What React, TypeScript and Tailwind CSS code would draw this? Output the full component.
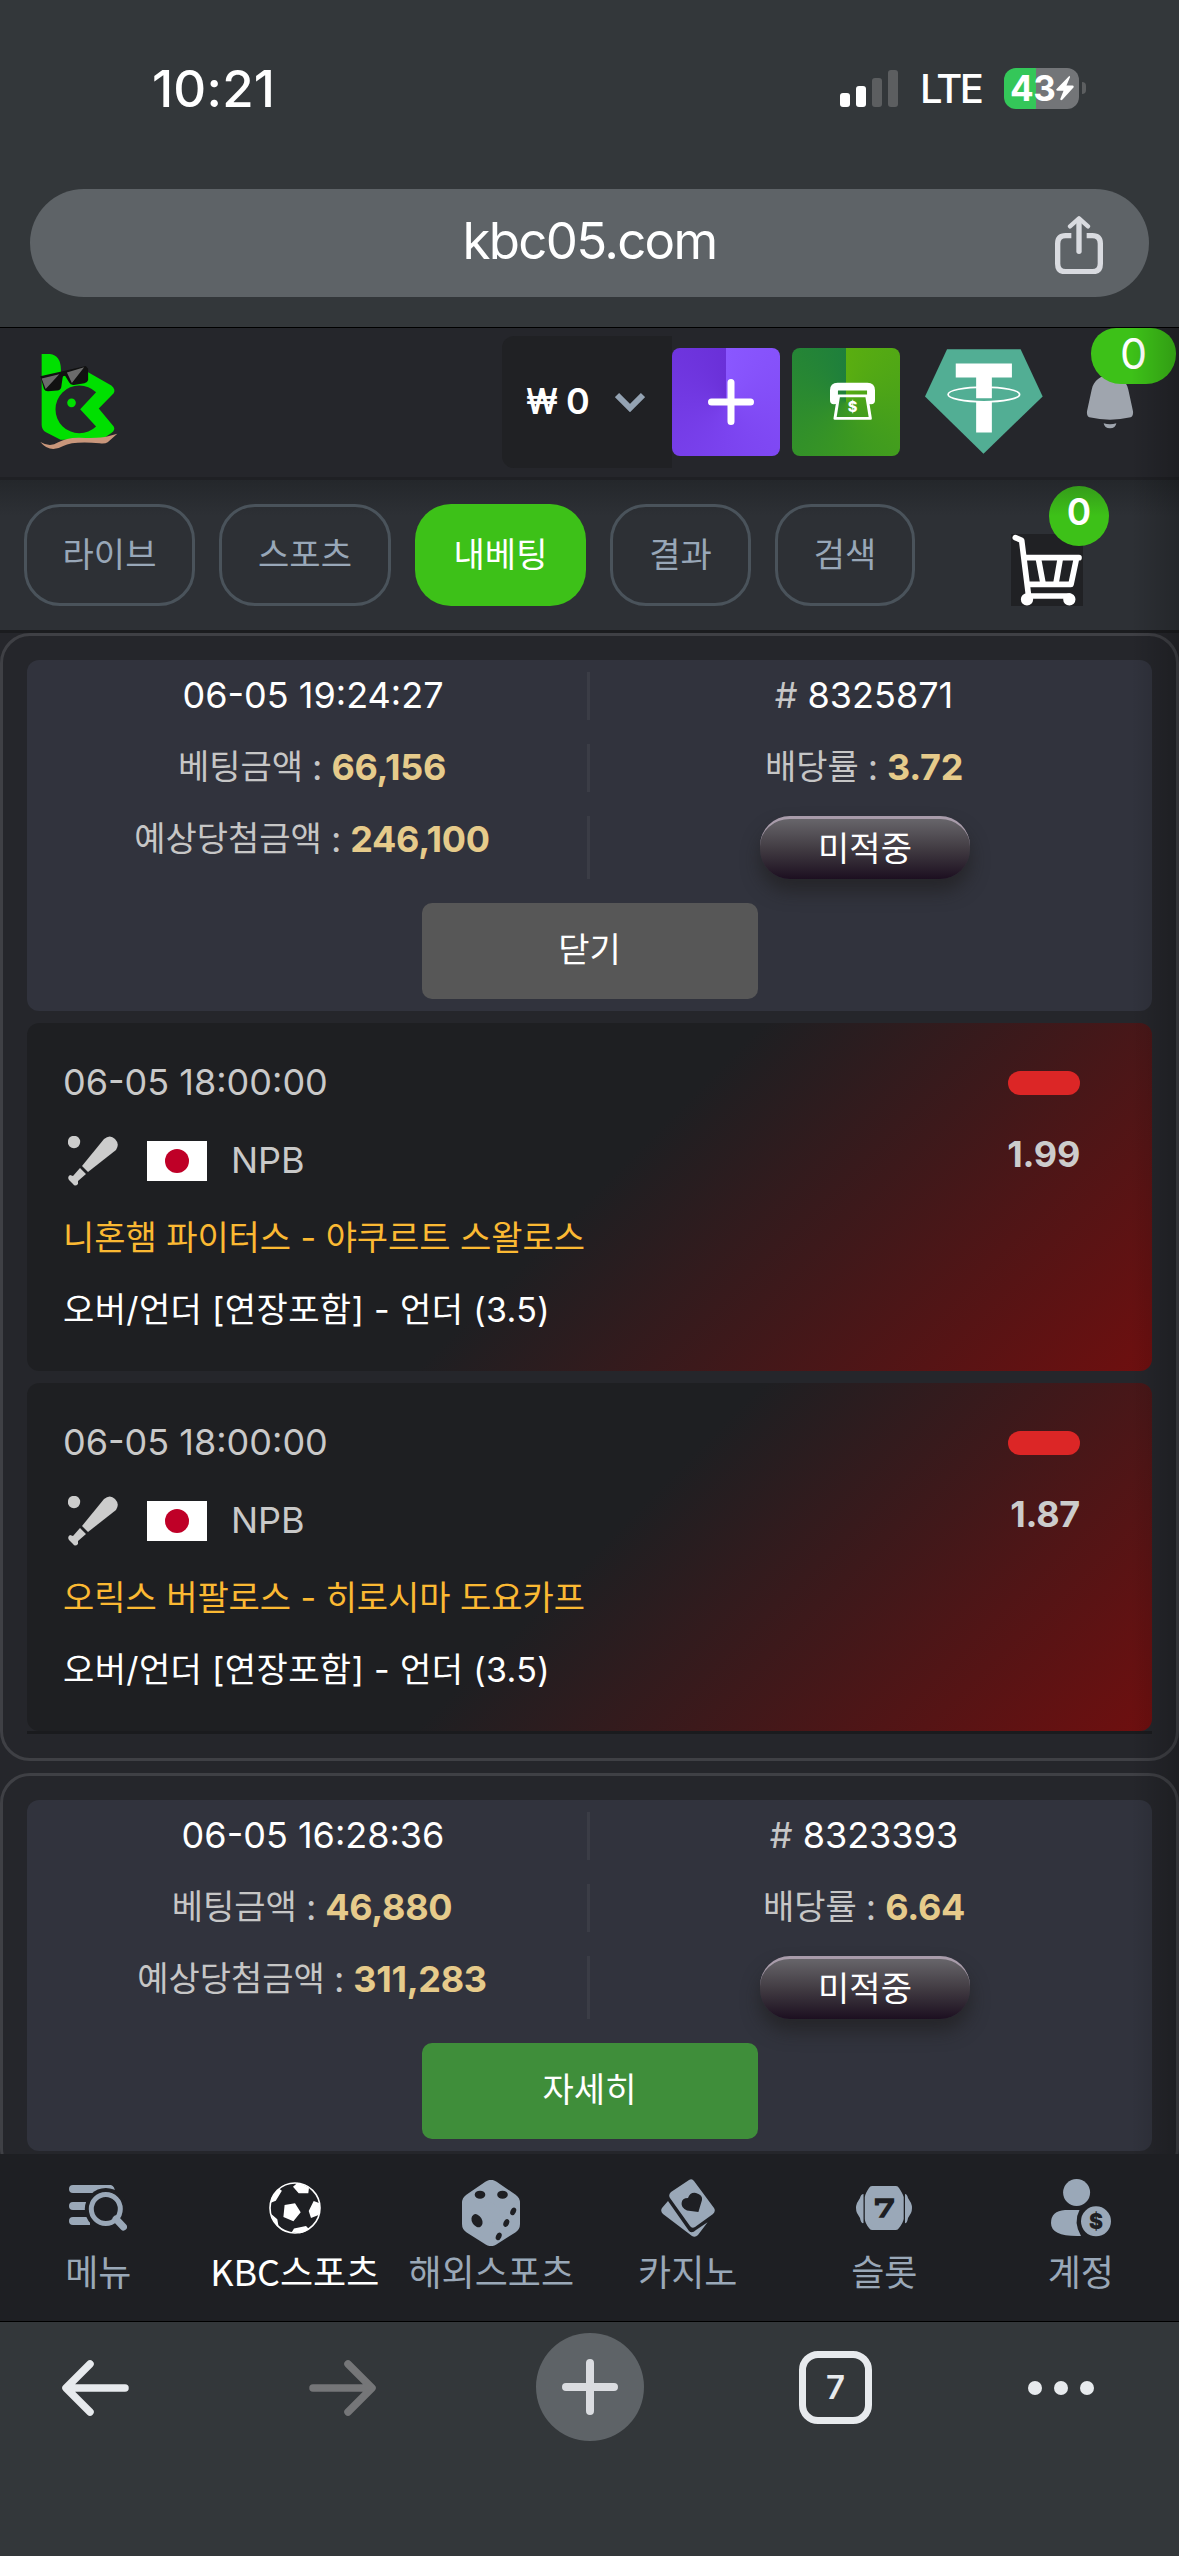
import React from "react";
import clsx from "clsx";

type Match = {
  time: string;
  league: string;
  teams: string;
  pick: string;
  odd: string;
};

type Bet = {
  date: string;
  id: string;
  amount: string;
  odds: string;
  expected: string;
  open: boolean;
  matches: Match[];
};

const bets: Bet[] = [
  {
    date: "06-05 19:24:27",
    id: "8325871",
    amount: "66,156",
    odds: "3.72",
    expected: "246,100",
    open: true,
    matches: [
      {
        time: "06-05 18:00:00",
        league: "NPB",
        teams: "니혼햄 파이터스 - 야쿠르트 스왈로스",
        pick: "오버/언더 [연장포함] - 언더 (3.5)",
        odd: "1.99",
      },
      {
        time: "06-05 18:00:00",
        league: "NPB",
        teams: "오릭스 버팔로스 - 히로시마 도요카프",
        pick: "오버/언더 [연장포함] - 언더 (3.5)",
        odd: "1.87",
      },
    ],
  },
  {
    date: "06-05 16:28:36",
    id: "8323393",
    amount: "46,880",
    odds: "6.64",
    expected: "311,283",
    open: false,
    matches: [],
  },
];

const tabs = [
  { label: "라이브", width: "w-[171px]" },
  { label: "스포츠", width: "w-[172px]" },
  { label: "내베팅", width: "w-[171px]", active: true },
  { label: "결과", width: "w-[141px]" },
  { label: "검색", width: "w-[140px]" },
];

function StatusBar() {
  return (
    <div className="flex h-[176px] items-center pl-[152px] pr-[93px] text-white">
      <span className="pt-0.5 text-[51px] font-medium tracking-[0.2px]">10:21</span>
      <div className="ml-auto flex items-center">
        <div className="flex h-[37px] items-end gap-1.5">
          <div className="h-3.5 w-2.5 rounded-[3px] bg-white" />
          <div className="h-[21px] w-2.5 rounded-[3px] bg-white" />
          <div className="h-[29px] w-2.5 rounded-[3px] bg-[#5c5e60]" />
          <div className="h-[37px] w-2.5 rounded-[3px] bg-[#5c5e60]" />
        </div>
        <span className="ml-[22px] mt-0.5 w-[61px] text-[40px] font-medium tracking-[-2.6px]">LTE</span>
        <div className="ml-[23px] flex h-[41px] w-[75px] items-center rounded-xl bg-[linear-gradient(90deg,#34c759_32px,#737578_32px)] pl-[6px]">
          <span className="w-[46px] text-[35px] font-bold tracking-[-0.5px]">43</span>
          <svg width="18" height="26" viewBox="679 77 55 77" fill="#fff">
            <path d="M720 78L680 119Q679 124 684 124H702L692 149Q693 155 699 151L733 113Q734 108 729 108H711L722 82Z" />
          </svg>
        </div>
        <div className="ml-[3px] h-3 w-1 rounded-r-full bg-[#5c5e60]" />
      </div>
    </div>
  );
}

function AddressBar() {
  return (
    <div className="mx-[30px] mt-[13px] grid h-[108px] grid-cols-[1fr_auto_1fr] items-center rounded-full bg-[#5e6367]">
      <span />
      <span className="pb-1 text-[51px] tracking-[-1.7px] text-white">kbc05.com</span>
      <svg className="mr-[46px] mt-1 justify-self-end" width="48" height="58" viewBox="675 497 144 174" fill="none" stroke="#d9dbe0" strokeWidth="16">
        <path d="M724 556H707Q683 556 683 580V640Q683 664 707 664H787Q811 664 811 640V580Q811 556 787 556H770" />
        <path d="M747 603V508" strokeLinecap="round" />
        <path d="M720 528L747 504L774 528" strokeWidth="13" strokeLinecap="round" strokeLinejoin="round" />
      </svg>
    </div>
  );
}

function Logo() {
  return (
    <svg width="78" height="97" viewBox="120 100 235 290">
      <path d="M125 102H150Q182 106 183 148V170L265 157L335 197Q349 209 342 220L297 266L342 320Q348 330 335 340L305 360H182L138 338Q125 330 125 315Z" fill="#00e000" />
      <path d="M289 217A72 72 0 1 0 289 320L241 268Z" fill="#25262b" />
      <circle cx="215" cy="249" r="13" fill="#00e000" />
      <path d="M121 169L258 138L265 146V180Q263 188 254 190L222 195Q212 196 208 188L196 168Q188 166 188 174L184 202Q182 211 172 212L144 214Q135 214 132 207Z" fill="#111" />
      <path d="M125 176L178 163L137 207ZM201 158L253 142L216 189Z" fill="#6b6b6b" />
      <path d="M121 367Q150 384 175 368Q200 353 240 354Q300 357 325 350L353 342L324 368Q316 373 300 371Q220 364 190 379Q150 402 121 367Z" fill="#c9967b" />
    </svg>
  );
}

function Header() {
  return (
    <header className="relative flex h-[152px] items-center overflow-hidden border-b-[3px] border-[#1f2024] bg-[#25262b] pb-0.5 pl-10 pr-[45px]">
      <Logo />
      <div className="ml-auto flex h-[132px] w-[170px] items-center rounded-l-xl bg-[#202124] pl-6">
        <div className="flex w-[89px] items-center gap-[9px] pb-0.5 text-[36px] font-semibold text-white">
          <span className="inline-block w-[31px] origin-left scale-x-[0.88]">₩</span>
          <span>0</span>
        </div>
        <svg width="30" height="20" viewBox="0 0 30 20" fill="none" stroke="#94a3b3" strokeWidth="6">
          <path d="M2 3L15 16L28 3" />
        </svg>
      </div>
      <button className="flex size-[108px] items-center justify-center rounded-lg bg-[conic-gradient(#8a57ff,#7b43ef_180deg,#6a30d8)] pl-2.5">
        <svg width="46" height="46" viewBox="0 0 46 46" stroke="#fff" strokeWidth="7" strokeLinecap="round">
          <path d="M23 3.500V42.500M3.500 23H42.500" />
        </svg>
      </button>
      <button className="ml-3 flex size-[108px] items-center justify-center rounded-lg bg-[conic-gradient(#5aae10,#3a9722_180deg,#1e7f3c)] pl-3">
        <svg width="45" height="39" viewBox="28 128 136 116" fill="none" stroke="#fff">
          <path d="M40 182V152Q40 141 51 141H141Q152 141 152 152V182" strokeWidth="24" strokeLinecap="round" />
          <path d="M54 169H139L150 237H43Z" strokeWidth="9" strokeLinejoin="round" />
          <text x="96" y="217" textAnchor="middle" fontSize="44" fontWeight="800" fill="#fff" stroke="none">$</text>
        </svg>
      </button>
      <svg className="ml-[25px]" width="118" height="105" viewBox="316 29 353 314" fill="#fff">
        <path d="M382 30H602L668 171L491 342L316 171Z" fill="#52ae94" />
        <path d="M408 72H576V114H516V176H469V114H408ZM469 187H516V279H469Z" />
        <ellipse cx="492" cy="165" rx="107" ry="22" fill="none" stroke="#fff" strokeWidth="5" />
      </svg>
      <div className="relative ml-[43px]">
        <svg width="48" height="57" viewBox="798 100 144 171" fill="#9fa5ae">
          <path d="M815 150C821 122 842 107 870 107C898 107 919 122 925 150L939 215Q941 229 932 233Q870 247 808 233Q799 229 801 215Z" />
          <path d="M851 251Q870 257 889 251Q887 266 870 266Q853 266 851 251Z" />
        </svg>
        <div className="absolute -top-[45px] left-[5px] flex h-14 w-[85px] items-center justify-center rounded-b-[30px] rounded-t-[25px] bg-[#3dc118] pb-1.5 text-[43px] leading-none text-white">
          0
        </div>
      </div>
    </header>
  );
}

function Tabs() {
  return (
    <div className="flex h-[153px] gap-6 border-b-[3px] border-[#1b1c1f] bg-[linear-gradient(#24272b,#2d3035_36px)] pl-6 pr-24 pt-6">
      {tabs.map((tab) => (
        <button
          key={tab.label}
          className={clsx(
            "h-[102px] shrink-0 rounded-[36px] pb-0.5 text-[34px]",
            tab.width,
            tab.active ? "bg-[#3dc118] text-white" : "border-[3px] border-[#4a535b] text-[#98a7b8]"
          )}
        >
          {tab.label}
        </button>
      ))}
      <div className="relative ml-auto mt-[30px] size-[72px] bg-[#202124]">
        <svg width="72" height="72" viewBox="573 582 216 216" fill="none" stroke="#fff" strokeWidth="17" strokeLinecap="round" strokeLinejoin="round">
          <path d="M586 593L605 601L626 770M620 653H777M770 653L753 733H628" />
          <path d="M655 655L669 730M721 655L708 730M622 768H748" />
          <circle cx="621" cy="778" r="10" fill="#fff" />
          <circle cx="748" cy="778" r="10" fill="#fff" />
        </svg>
        <span className="absolute -top-12 left-[38px] flex size-[60px] items-center justify-center rounded-full bg-[linear-gradient(#359c1a,#3dc118_50%)] pb-2 text-[37px] font-semibold text-white">
          0
        </span>
      </div>
    </div>
  );
}

function Cell({ children, divider }: { children: React.ReactNode; divider?: boolean }) {
  return (
    <div
      className={clsx(
        "flex h-full justify-center whitespace-nowrap leading-[46px] text-[#c6c6c6]",
        divider && "border-r-[3px] border-[#3b3d46]"
      )}
    >
      {children}
    </div>
  );
}

function Stat({ label, value }: { label: string; value: string }) {
  return (
    <>
      <span className="text-[34px]">{label}</span>
      <span className="mx-[9px]"> : </span>
      <span className="mr-0.5 font-bold tracking-[-0.3px] text-[#e6cb8b]">{value}</span>
    </>
  );
}

function BetSummary({ bet }: { bet: Bet }) {
  return (
    <div className="h-[351px] rounded-xl bg-[#31333d] px-3 pt-3 text-[36px]">
      <div className="grid grid-cols-[551px_1fr] grid-rows-[48px_48px_63px] gap-y-6">
        <Cell divider>
          <span className="text-white">{bet.date}</span>
        </Cell>
        <Cell>
          #<span className="ml-2.5 mr-0.5 text-white">{bet.id}</span>
        </Cell>
        <Cell divider>
          <Stat label="베팅금액" value={bet.amount} />
        </Cell>
        <Cell>
          <Stat label="배당률" value={bet.odds} />
        </Cell>
        <Cell divider>
          <Stat label="예상당첨금액" value={bet.expected} />
        </Cell>
        <Cell>
          <span className="h-[63px] w-[210px] rounded-[30px] border-t-[3px] border-[#a99cab] bg-[linear-gradient(#67656a,#413b42_50%,#1c0f20)] text-center text-[34px] leading-[59px] text-white shadow-[0_12px_18px_rgba(30,28,28,0.6)]">
            미적중
          </span>
        </Cell>
      </div>
      <button
        className={clsx(
          "mx-auto mt-6 block h-24 w-[336px] rounded-[10px] pb-[3px] text-[34px] text-white",
          bet.open ? "bg-[#575757]" : "bg-[#3f8e3a]"
        )}
      >
        {bet.open ? "닫기" : "자세히"}
      </button>
    </div>
  );
}

function MatchRow({ match }: { match: Match }) {
  return (
    <div className="flex h-[348px] justify-between rounded-xl bg-[linear-gradient(135deg,#1e1f22_50%,#6f0f0f)] py-9 pl-9 pr-[72px] text-[36px] leading-[47px] text-[#c9c9c9]">
      <div className="flex flex-col whitespace-nowrap">
        <span>{match.time}</span>
        <div className="mt-[25px] flex h-[60px] items-center">
          <svg className="ml-[5px]" width="50" height="50" viewBox="0 0 50 50" fill="#ccc">
            <circle cx="6" cy="6" r="6.200" />
            <path d="M36 3Q42 -2 47 3Q52 8 48 14L20 36L14 30Z" />
            <path d="M12 32L18 38L10 45V48Q7 51 5 48L1 44Q-1 41 2 39L5 40Z" />
          </svg>
          <div className="ml-[29px] flex h-10 w-[60px] items-center justify-center bg-white">
            <div className="size-6 rounded-full bg-[#bf0027]" />
          </div>
          <span className="ml-6 pb-px">{match.league}</span>
        </div>
        <span className="mt-[23px] text-[34px] tracking-[-0.06px] text-[#fbb933]">{match.teams}</span>
        <span className="mt-[25px] text-[34px] tracking-[0.36px] text-white">{match.pick}</span>
      </div>
      <div className="flex flex-col items-end">
        <div className="mt-3 h-6 w-[72px] rounded-xl bg-[#dc2626]" />
        <span className="mt-9 font-bold tracking-[-0.3px] text-[#ccc]">{match.odd}</span>
      </div>
    </div>
  );
}

function BetCard({ bet }: { bet: Bet }) {
  return (
    <section className="rounded-[30px] border-[3px] border-[#3f4045] p-6">
      <BetSummary bet={bet} />
      {bet.matches.length > 0 && (
        <div className="mt-3 flex flex-col gap-3 border-b-[3px] border-[#1a1b1e]">
          {bet.matches.map((match) => (
            <MatchRow key={match.teams} match={match} />
          ))}
        </div>
      )}
    </section>
  );
}

const icons = {
  menu: (
    <svg width="58" height="46" viewBox="0 0 58 46" fill="#9aa8b8">
      <path d="M4 0H42Q46 1 46 8H4Q0 8 0 4Q0 0 4 0ZM4 17H18V25H4Q0 25 0 21Q0 17 4 17ZM4 32H21V40H4Q0 40 0 36Q0 32 4 32Z" />
      <circle cx="36.800" cy="24" r="21" fill="#1e1f23" />
      <circle cx="36.800" cy="24" r="14.500" fill="none" stroke="#9aa8b8" strokeWidth="5" />
      <path d="M47 34L54.500 42" stroke="#9aa8b8" strokeWidth="7" strokeLinecap="round" />
    </svg>
  ),
  ball: (
    <svg width="52" height="52" viewBox="0 0 52 52" fill="#fff">
      <circle cx="26" cy="26" r="25" fill="none" stroke="#fff" strokeWidth="1.600" />
      <path d="M15.600 23L26 21.300L31.700 30.300L24.400 39.300L14.400 35ZM24 4.700L28.600 0.700Q35 2 40 5.700L39.300 11.300H29.700ZM1.800 20.700L3 14.700L10.200 6.700L12.900 8.700L6.800 18.700ZM44.700 19L50 21Q52 28 49.600 33L42 36L39.700 29ZM22.900 50L25 46.500L37 44L40 47Q35 51 30.500 51.300ZM2.200 32L8.300 37.300L9.500 44L16 50Q5 44 2.200 32Z" />
    </svg>
  ),
  dice: (
    <svg className="mt-2.5" width="58" height="66" viewBox="0 0 58 66" fill="#1e1f23">
      <path d="M29 10L48 23V44L29 56L10 44V23Z" fill="#9aa8b8" stroke="#9aa8b8" strokeWidth="20" strokeLinejoin="round" />
      <ellipse cx="18" cy="14.700" rx="5.300" ry="4" />
      <ellipse cx="40.500" cy="14.700" rx="5.300" ry="4" />
      <ellipse cx="15" cy="40.700" rx="5" ry="7" transform="rotate(-30 15 40.700)" />
      <ellipse cx="51.200" cy="31.300" rx="2.700" ry="4" transform="rotate(25 51.200 31.300)" />
      <ellipse cx="44.300" cy="43" rx="2.700" ry="4" transform="rotate(25 44.300 43)" />
      <ellipse cx="36.700" cy="56.300" rx="2.700" ry="4" transform="rotate(25 36.700 56.300)" />
    </svg>
  ),
  cards: (
    <svg width="54" height="58" viewBox="0 0 54 58" fill="#9aa8b8">
      <path d="M28 1Q31 -1 33 2L53 29Q55 32 52 35L34 48Q31 50 29 47L9 19Q7 16 10 13Z" />
      <path d="M7 22L28 52Q31 55 35 51L46.600 43.300L37 56Q34 59 31 57L2 35Q-1 32 1 29Z" />
      <path d="M20.600 24Q21 19 27 19Q29 13 35 14Q42 16 41 21L37.400 33L26 31.500Q20 29 20.600 24Z" fill="#1e1f23" />
    </svg>
  ),
  slot: (
    <svg width="56" height="44" viewBox="0 0 56 44" fill="#9aa8b8">
      <path d="M16 0H40Q42 0 43 2Q47 8 47.700 11V33Q47 37 43 42Q42 44 40 44H16Q14 44 13 42Q9 37 8.800 33V11Q9 8 13 2Q14 0 16 0Z" />
      <path d="M7.500 8V37Q5 38 4 32L1 27Q-1 22 1 17L4 12Q5 8 7.500 8ZM49 8V37Q51 38 52 32L55 27Q57 22 55 17L52 12Q51 8 49 8Z" />
      <text
        x="22"
        y="31.500"
        textAnchor="middle"
        fontSize="25"
        fontWeight="700"
        fill="#1e1f23"
        stroke="#1e1f23"
        strokeWidth="1.500"
        transform="scale(1.3 1)"
        className="font-['DejaVu_Serif',serif]"
      >
        7
      </text>
    </svg>
  ),
  account: (
    <svg width="60" height="58" viewBox="0 0 60 58" fill="#9aa8b8">
      <circle cx="25.600" cy="13.500" r="13.500" />
      <path d="M14 31H28.500Q22 43 30 57Q0 58 0 44Q0 32 14 31Z" />
      <circle cx="45" cy="42.300" r="15" />
      <text x="45" y="50" textAnchor="middle" fontSize="21" fontWeight="900" fill="#1e1f23">$</text>
    </svg>
  ),
};

const navItems = [
  { label: "메뉴", icon: icons.menu },
  { label: "KBC스포츠", icon: icons.ball, active: true },
  { label: "해외스포츠", icon: icons.dice },
  { label: "카지노", icon: icons.cards },
  { label: "슬롯", icon: icons.slot },
  { label: "계정", icon: icons.account },
];

function BottomNav() {
  return (
    <nav className="grid h-[168px] grid-cols-6 border-b border-black bg-[#1e1f23] pt-5">
      {navItems.map((item) => (
        <div key={item.label} className="flex flex-col items-center">
          <div className="flex h-[68px] items-center">{item.icon}</div>
          <span
            className={clsx(
              "mt-1 whitespace-nowrap font-['Noto_Sans_CJK_KR',sans-serif] text-[36px] leading-[48px]",
              item.active ? "text-white" : "text-[#9aa8b8]"
            )}
          >
            {item.label}
          </span>
        </div>
      ))}
    </nav>
  );
}

function BrowserToolbar() {
  return (
    <div className="flex h-[131px] items-center pl-[62px]">
      <svg width="67" height="56" viewBox="0 0 67 56" fill="none" stroke="#e7eaed" strokeWidth="7.500" strokeLinecap="round" strokeLinejoin="round">
        <path d="M28 4L4 28L28 52M5 28H63" />
      </svg>
      <svg className="ml-[180px]" width="67" height="56" viewBox="0 0 67 56" fill="none" stroke="#757678" strokeWidth="7.500" strokeLinecap="round" strokeLinejoin="round">
        <path d="M39 4L63 28L39 52M62 28H4" />
      </svg>
      <div className="mb-0.5 ml-[160px] flex size-[108px] items-center justify-center rounded-full bg-[#5e6367]">
        <svg width="56" height="56" viewBox="0 0 56 56" stroke="#dadce0" strokeWidth="8" strokeLinecap="round">
          <path d="M28 4V52M4 28H52" />
        </svg>
      </div>
      <div className="ml-[155px] flex size-[73px] items-center justify-center rounded-[19px] border-[7px] border-[#e7eaed] text-[33px] font-semibold text-[#e7eaed]">
        7
      </div>
      <div className="ml-[156px] flex gap-3">
        <span className="size-[14px] rounded-full bg-[#e7eaed]" />
        <span className="size-[14px] rounded-full bg-[#e7eaed]" />
        <span className="size-[14px] rounded-full bg-[#e7eaed]" />
      </div>
    </div>
  );
}

function App() {
  return (
    <div className="flex h-[2556px] w-[1179px] flex-col overflow-hidden bg-[#33373a] font-['Inter','Noto_Sans_CJK_KR',sans-serif]">
      <div className="h-[328px] border-b border-black">
        <StatusBar />
        <AddressBar />
      </div>
      <div className="relative h-[1826px] overflow-hidden bg-[#25262b]">
        <Header />
        <Tabs />
        <main className="flex flex-col gap-3">
          {bets.map((bet) => (
            <BetCard key={bet.id} bet={bet} />
          ))}
        </main>
        <div className="pointer-events-none absolute inset-y-0 right-0 w-12 bg-linear-to-r from-transparent to-black/20" />
      </div>
      <BottomNav />
      <BrowserToolbar />
    </div>
  );
}

export default App;
